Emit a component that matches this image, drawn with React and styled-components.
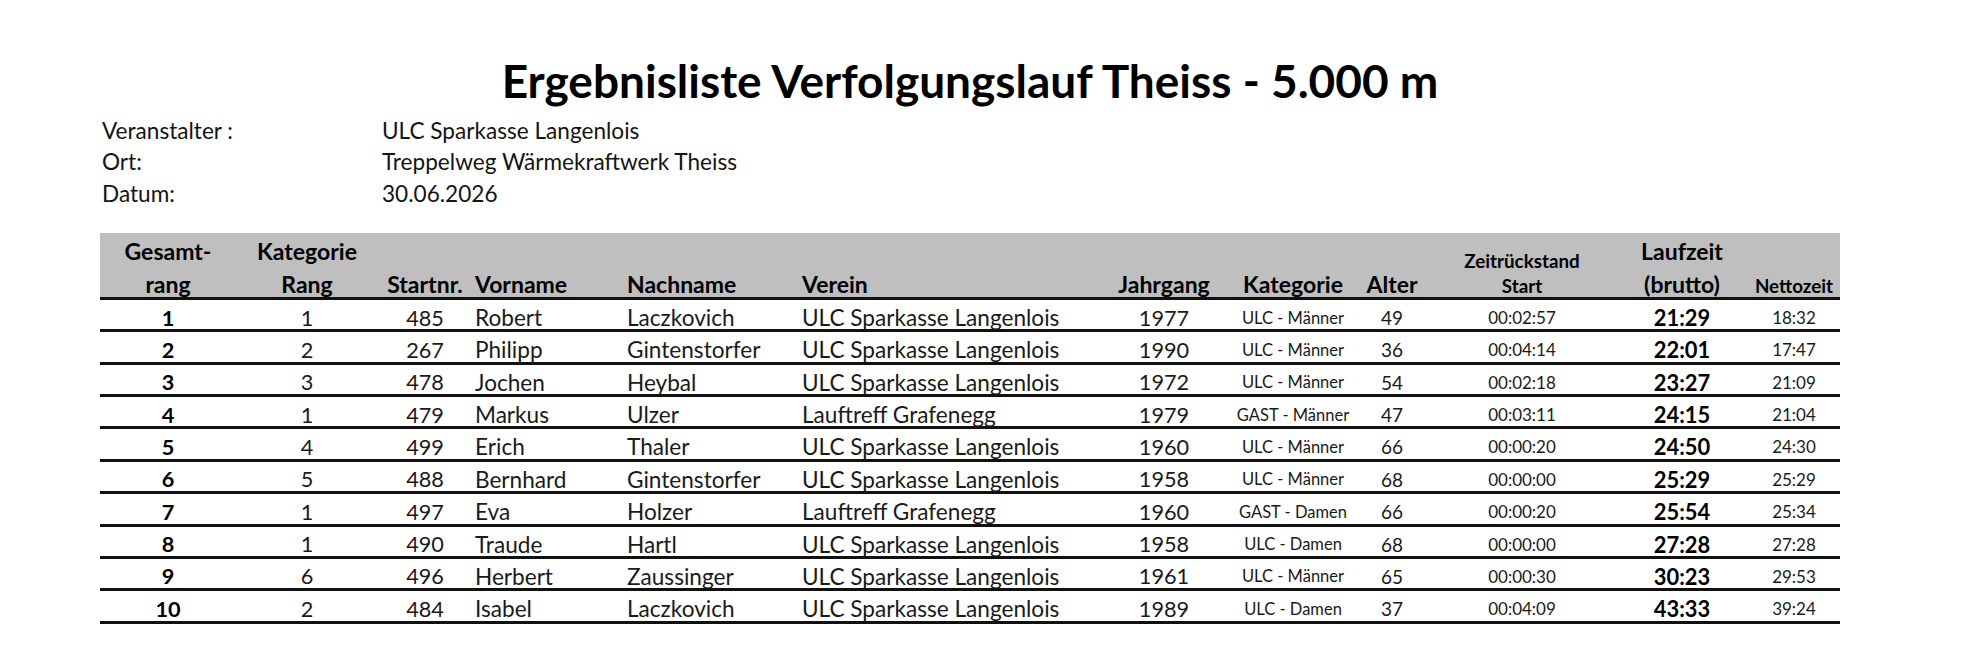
import React from "react";
import styled, { createGlobalStyle } from "styled-components";

const GlobalStyle = createGlobalStyle`
  body {
    margin: 0;
    background: #ffffff;
    color: #141414;
    font-family: Lato, "Open Sans", "Liberation Sans", sans-serif;
  }
`;

// column layout of the result table (widths sum to the 1740px table)
const columns = [
  { key: "pos", head: ["Gesamt-", "rang"], w: 136, size: 21.7, bold: true },
  { key: "cat", head: ["Kategorie", "Rang"], w: 142, size: 21.7 },
  { key: "nr", head: ["Startnr."], w: 94, size: 21.7 },
  { key: "first", head: ["Vorname"], w: 152, size: 22.6, left: true },
  { key: "last", head: ["Nachname"], w: 175, size: 22.6, left: true },
  { key: "club", head: ["Verein"], w: 311, size: 22.6, left: true },
  { key: "year", head: ["Jahrgang"], w: 108, size: 21.7 },
  { key: "klass", head: ["Kategorie"], w: 150, size: 16.5 },
  { key: "age", head: ["Alter"], w: 48, size: 19 },
  { key: "gap", head: ["Zeitrückstand", "Start"], w: 212, size: 17, small: true },
  { key: "gross", head: ["Laufzeit", "(brutto)"], w: 108, size: 21.9, bold: true },
  { key: "net", head: ["Nettozeit"], w: 104, size: 17, small: true, shift: 12 },
];

const grid = columns.map((c) => `${c.w}px`).join(" ");

const results = [
  [1, 1, 485, "Robert", "Laczkovich", "ULC Sparkasse Langenlois", 1977, "ULC - Männer", 49, "00:02:57", "21:29", "18:32"],
  [2, 2, 267, "Philipp", "Gintenstorfer", "ULC Sparkasse Langenlois", 1990, "ULC - Männer", 36, "00:04:14", "22:01", "17:47"],
  [3, 3, 478, "Jochen", "Heybal", "ULC Sparkasse Langenlois", 1972, "ULC - Männer", 54, "00:02:18", "23:27", "21:09"],
  [4, 1, 479, "Markus", "Ulzer", "Lauftreff Grafenegg", 1979, "GAST - Männer", 47, "00:03:11", "24:15", "21:04"],
  [5, 4, 499, "Erich", "Thaler", "ULC Sparkasse Langenlois", 1960, "ULC - Männer", 66, "00:00:20", "24:50", "24:30"],
  [6, 5, 488, "Bernhard", "Gintenstorfer", "ULC Sparkasse Langenlois", 1958, "ULC - Männer", 68, "00:00:00", "25:29", "25:29"],
  [7, 1, 497, "Eva", "Holzer", "Lauftreff Grafenegg", 1960, "GAST - Damen", 66, "00:00:20", "25:54", "25:34"],
  [8, 1, 490, "Traude", "Hartl", "ULC Sparkasse Langenlois", 1958, "ULC - Damen", 68, "00:00:00", "27:28", "27:28"],
  [9, 6, 496, "Herbert", "Zaussinger", "ULC Sparkasse Langenlois", 1961, "ULC - Männer", 65, "00:00:30", "30:23", "29:53"],
  [10, 2, 484, "Isabel", "Laczkovich", "ULC Sparkasse Langenlois", 1989, "ULC - Damen", 37, "00:04:09", "43:33", "39:24"],
];

const meta = [
  ["Veranstalter :", "ULC Sparkasse Langenlois"],
  ["Ort:", "Treppelweg Wärmekraftwerk Theiss"],
  ["Datum:", "30.06.2026"],
];

function App() {
  return (
    <>
      <GlobalStyle />
      <Page>
        <Title>Ergebnisliste Verfolgungslauf Theiss - 5.000 m</Title>
        <MetaList>
          {meta.map(([label, value]) => (
            <React.Fragment key={label}>
              <MetaLabel>{label}</MetaLabel>
              <MetaValue>{value}</MetaValue>
            </React.Fragment>
          ))}
        </MetaList>
        <Table>
          <HeadRow>
            {columns.map((c) => (
              <HeadCell key={c.key} $left={c.left} $shift={c.shift}>
                <HeadStack $small={c.small}>
                  {c.head.map((line) => (
                    <span key={line}>{line}</span>
                  ))}
                </HeadStack>
              </HeadCell>
            ))}
          </HeadRow>
          {results.map((row) => (
            <Row key={row[0]}>
              {row.map((value, i) => {
                const c = columns[i];
                return (
                  <Cell key={c.key} $left={c.left} $shift={c.shift} $size={c.size} $bold={c.bold}>
                    {value}
                  </Cell>
                );
              })}
            </Row>
          ))}
        </Table>
      </Page>
    </>
  );
}

const Page = styled.div`
  width: 1740px;
  padding: 56px 0 0 100px;
`;

const Title = styled.h1`
  margin: 0;
  text-align: center;
  font-size: 46px;
  line-height: 50px;
  font-weight: 700;
  color: #000;
`;

const MetaList = styled.div`
  display: grid;
  grid-template-columns: 280px auto;
  margin-top: 8.6px;
  padding-left: 2px;
  font-size: 22.6px;
  line-height: 31.5px;
`;

const MetaLabel = styled.div``;

const MetaValue = styled.div``;

const Table = styled.div`
  margin-top: 24px;
`;

const HeadRow = styled.div`
  display: grid;
  grid-template-columns: ${grid};
  height: 67px;
  box-sizing: border-box;
  background: #bfbfbf;
  border-bottom: 3px solid #111;
`;

const HeadCell = styled.div`
  display: flex;
  flex-direction: column;
  justify-content: flex-end;
  align-items: ${(p) => (p.$left ? "flex-start" : "center")};
  padding-left: ${(p) => (p.$left ? 3 : p.$shift || 0)}px;
  white-space: nowrap;
  font-weight: 700;
  color: #000;
`;

const HeadStack = styled.div`
  display: flex;
  flex-direction: column;
  align-items: inherit;
  font-size: ${(p) => (p.$small ? 18.8 : 23)}px;
  line-height: ${(p) => (p.$small ? 25 : 33)}px;
  margin-bottom: ${(p) => (p.$small ? -0.9 : -4.3)}px;
`;

const Row = styled.div`
  display: grid;
  grid-template-columns: ${grid};
  height: 32.35px;
  box-sizing: border-box;
  border-bottom: 3px solid #111;
`;

const Cell = styled.div`
  display: flex;
  align-items: center;
  justify-content: ${(p) => (p.$left ? "flex-start" : "center")};
  padding-top: 4px;
  padding-left: ${(p) => (p.$left ? 3 : p.$shift || 0)}px;
  white-space: nowrap;
  font-size: ${(p) => p.$size}px;
  font-weight: ${(p) => (p.$bold ? 700 : 400)};
  color: ${(p) => (p.$bold ? "#000" : "#1a1a1a")};
`;

export default App;
